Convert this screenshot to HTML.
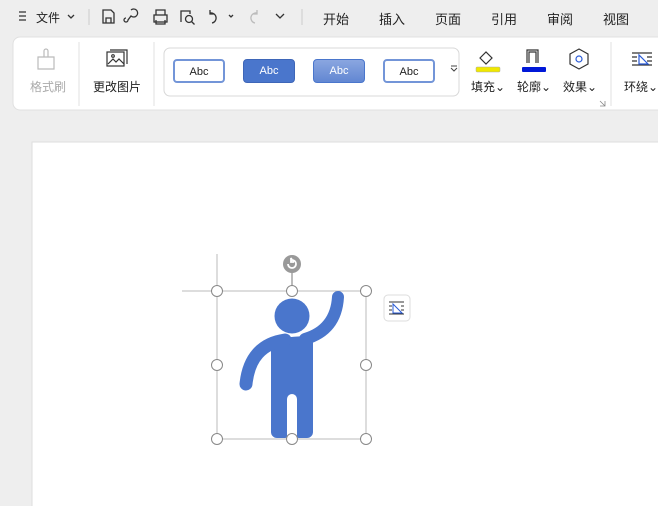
<!DOCTYPE html>
<html><head><meta charset="utf-8"><style>
body{margin:0;width:658px;height:506px;overflow:hidden;background:#eeeeee;font-family:"Liberation Sans","Noto Sans CJK SC",sans-serif;position:relative}
.t{position:absolute;font-size:13px;color:#222;white-space:nowrap}
.s{position:absolute;font-size:12px;color:#222;white-space:nowrap}
.abc{position:absolute;top:59px;width:52px;height:24px;border-radius:4px;box-sizing:border-box;font-size:11px;text-align:center;line-height:22px}
</style></head><body>
<svg width="658" height="506" style="position:absolute;left:0;top:0">
<!-- ribbon -->
<rect x="13" y="37" width="660" height="73" rx="7" fill="#fff" stroke="#e0e0e0"/>
<line x1="79" y1="42" x2="79" y2="106" stroke="#e0e0e0"/>
<line x1="154" y1="42" x2="154" y2="106" stroke="#e0e0e0"/>
<line x1="611" y1="42" x2="611" y2="106" stroke="#e0e0e0"/>
<rect x="164" y="48" width="295" height="48" rx="6" fill="#fff" stroke="#d8d8d8"/>
<line x1="89" y1="9" x2="89" y2="25" stroke="#ccc"/>
<line x1="302" y1="9" x2="302" y2="25" stroke="#ccc"/>
<!-- page -->
<rect x="32" y="142" width="640" height="380" fill="#fff" stroke="#ddd"/>
<!-- toolbar icons -->
<g fill="none" stroke="#333" stroke-width="1.3">
<path d="M19 12h7M19 16h7M19 20h7"/>
<path d="M68 15l3 3 3-3"/>
<path d="M103 10h8l3 3v10h-11z M106 18h5v5h-5z"/>
<path d="M131 10a4 4 0 1 1 0 6l-3 4a2 2 0 1 1-2-2"/>
<rect x="154" y="15" width="13" height="7"/><path d="M156 15v-5h9v5M156 20v4h9v-4"/>
<path d="M181 22v-11h9v3"/><circle cx="189" cy="19" r="3.5"/><path d="M191.5 21.5l3 3"/>
<path d="M210 13a5 5 0 1 1 2 10M210 10v4h4"/><path d="M229 15l2 2 2-2"/>
<path d="M276 14l4 4 4-4"/>
</g>
<path d="M257 13a5 5 0 1 0-2 10M257 10v4h-4" fill="none" stroke="#bbb" stroke-width="1.3"/>
<!-- ribbon icons -->
<path d="M38 57h16v12H38zM44 57v-6a2 2 0 0 1 4 0v6" fill="none" stroke="#bbb" stroke-width="1.2"/>
<g fill="none" stroke="#333" stroke-width="1.2">
<rect x="107" y="52" width="17" height="14"/><path d="M110 50h17v14"/><path d="M108 64l5-5 3 3 3-3 5 5"/><circle cx="113" cy="56" r="1.3"/>
<path d="M480 58l6-6 6 6-6 6z"/>
<path d="M527 63V50h11v13M529 63V52h7v11"/>
<path d="M579 49l9 5v10l-9 5-9-5V54z"/>
<path d="M632 53h20M632 65h20M632 57h5M632 61h5M647 57h5M647 61h5"/>
</g>
<circle cx="579" cy="59" r="3" fill="none" stroke="#2a5bd7" stroke-width="1.2"/>
<path d="M639 55v9h9z" fill="none" stroke="#2a5bd7" stroke-width="1.2"/>
<rect x="476" y="67" width="24" height="5" rx="1" fill="#f0e800" stroke="#aaa" stroke-width=".5"/>
<rect x="522" y="67" width="24" height="5" rx="1" fill="#0018d8"/>
<path d="M451 68l3 3 3-3M451 66h6" fill="none" stroke="#444"/>
<path d="M600 101l5 5M605 101v5h-5" fill="none" stroke="#888" stroke-width=".8"/>
<!-- selection -->
<g stroke="#bbb" fill="none">
<line x1="217" y1="254" x2="217" y2="439"/><line x1="182" y1="291" x2="367" y2="291"/>
<rect x="217" y="291" width="149" height="148"/>
<line x1="292" y1="272" x2="292" y2="290" stroke="#777"/>
</g>
<circle cx="292" cy="264" r="9" fill="#999"/>
<path d="M288 264a4 4 0 1 0 4-4l-1-2v4h3" fill="none" stroke="#fff" stroke-width="1.8"/>
<!-- figure -->
<g fill="#4a76cc">
<circle cx="292" cy="316" r="17.5"/>
<path d="M271 341Q285 336 313 336V432a6 6 0 0 1-6 6h-8a2 2 0 0 1-2-2v-37a5 5 0 0 0-10 0v37a2 2 0 0 1-2 2h-8a6 6 0 0 1-6-6z"/>
</g>
<g fill="none" stroke="#4a76cc" stroke-linecap="round">
<path d="M285 340Q250 345 246 384" stroke-width="13"/>
<path d="M305 339Q336 330 338 297" stroke-width="12"/>
</g>
<g fill="#fff" stroke="#888">
<circle cx="217" cy="291" r="5.5"/><circle cx="292" cy="291" r="5.5"/><circle cx="366" cy="291" r="5.5"/>
<circle cx="217" cy="365" r="5.5"/><circle cx="366" cy="365" r="5.5"/>
<circle cx="217" cy="439" r="5.5"/><circle cx="292" cy="439" r="5.5"/><circle cx="366" cy="439" r="5.5"/>
</g>
<rect x="384" y="295" width="26" height="26" rx="4" fill="#fff" stroke="#ddd"/>
<g stroke="#333" fill="none"><path d="M389 302h15M389 314h15M389 306h3M389 310h3M401 306h3M401 310h3"/></g>
<path d="M393 304v9h9z" fill="none" stroke="#2a5bd7"/>
</svg>
<div class="t" style="left:36px;top:9px;font-size:12px">文件</div>
<div class="t" style="left:323px;top:9px">开始</div>
<div class="t" style="left:379px;top:9px">插入</div>
<div class="t" style="left:435px;top:9px">页面</div>
<div class="t" style="left:491px;top:9px">引用</div>
<div class="t" style="left:547px;top:9px">审阅</div>
<div class="t" style="left:603px;top:9px">视图</div>
<div class="s" style="left:30px;top:78px;color:#aaa">格式刷</div>
<div class="s" style="left:93px;top:78px">更改图片</div>
<div class="s" style="left:471px;top:78px">填充⌄</div>
<div class="s" style="left:517px;top:78px">轮廓⌄</div>
<div class="s" style="left:563px;top:78px">效果⌄</div>
<div class="s" style="left:624px;top:78px">环绕⌄</div>
<div class="abc" style="left:173px;border:2px solid #7395d8;background:#fff;color:#222">Abc</div>
<div class="abc" style="left:243px;background:#4a76cc;border:1px solid #3e66b8;color:#fff">Abc</div>
<div class="abc" style="left:313px;background:linear-gradient(#8aa6e0,#6287d2);border:1px solid #4a76cc;color:#fff">Abc</div>
<div class="abc" style="left:383px;border:2px solid #7395d8;background:#fff;color:#222">Abc</div>
</body></html>
